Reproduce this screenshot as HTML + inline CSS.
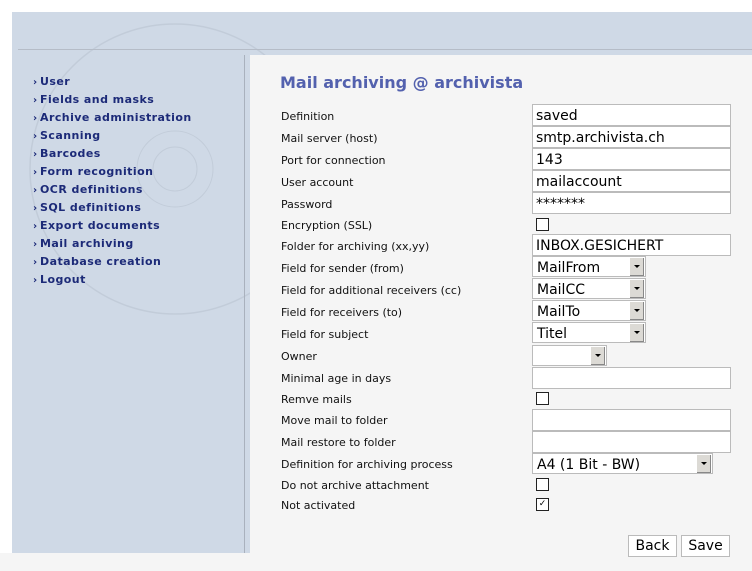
<!DOCTYPE html><html><head><style>
body{margin:0;width:752px;height:571px;background:#f5f5f5;position:relative;overflow:hidden;font-family:"DejaVu Sans","Liberation Sans",sans-serif}
#w{position:absolute;left:0;top:0;width:752px;height:12px;background:#fff}
#wl{position:absolute;left:0;top:0;width:12px;height:553px;background:#fff}
#p{position:absolute;left:12px;top:12px;width:740px;height:541px;background:#cfd9e6}
#hl{position:absolute;left:18px;top:49px;width:734px;height:1px;background:#b5bcc7}
#vl{position:absolute;left:244px;top:55px;width:1px;height:498px;background:#a9b1bd}
#c{position:absolute;left:250px;top:55px;width:502px;height:516px;background:#f5f5f5}
.m{position:absolute;left:33px;font-size:11px;font-weight:bold;color:#1c2a78;letter-spacing:.45px}
.m:before{content:"›";font-size:10px;display:inline-block;width:7px}
.l{position:absolute;left:281px;font-size:11px;color:#111}
.i{position:absolute;left:532px;width:194px;height:20px;border:1px solid #bbb;background:#fff;font-size:14px;line-height:23px;padding-left:3px;box-sizing:content-box}
.s{position:absolute;left:532px;height:21px;border:1px solid #bbb;background:#fff;font-size:14px;line-height:22px;padding-left:4px;box-sizing:border-box}
.s b{position:absolute;right:1px;top:1px;width:14px;height:18px;background:#dcdad5;border-right:1px solid #888;border-bottom:1px solid #888;box-sizing:border-box}
.s b:after{content:"";position:absolute;left:4px;top:7px;border:3px solid transparent;border-top:3px solid #000}
.c{position:absolute;left:536px;width:11px;height:11px;border:1px solid #222;background:#fff;font-size:9px;line-height:11px;text-align:center}
.btn{position:absolute;top:535px;height:20px;border:1px solid #bbb;background:#fff;font-size:14px;line-height:20px;text-align:center}
</style></head><body>
<div id="w"></div><div id="wl"></div><div id="p">
<svg width="740" height="541" style="position:absolute;left:0;top:0"><circle cx="163" cy="157" r="145" fill="none" stroke="#c2ccd9" stroke-width="1.5"/><circle cx="163" cy="157" r="38" fill="none" stroke="#c2ccd9"/><circle cx="163" cy="157" r="22" fill="none" stroke="#c2ccd9"/></svg></div>
<div id="hl"></div><div id="vl"></div><div id="c"></div>
<div class="m" style="top:75px">User</div>
<div class="m" style="top:93px">Fields and masks</div>
<div class="m" style="top:111px">Archive administration</div>
<div class="m" style="top:129px">Scanning</div>
<div class="m" style="top:147px">Barcodes</div>
<div class="m" style="top:165px">Form recognition</div>
<div class="m" style="top:183px">OCR definitions</div>
<div class="m" style="top:201px">SQL definitions</div>
<div class="m" style="top:219px">Export documents</div>
<div class="m" style="top:237px">Mail archiving</div>
<div class="m" style="top:255px">Database creation</div>
<div class="m" style="top:273px">Logout</div>
<div style="position:absolute;left:280px;top:73px;font-size:16px;font-weight:bold;color:#5361ae">Mail archiving @ archivista</div>
<div class="l" style="top:110px">Definition</div>
<div class="l" style="top:132px">Mail server (host)</div>
<div class="l" style="top:154px">Port for connection</div>
<div class="l" style="top:176px">User account</div>
<div class="l" style="top:198px">Password</div>
<div class="l" style="top:219px">Encryption (SSL)</div>
<div class="l" style="top:240px">Folder for archiving (xx,yy)</div>
<div class="l" style="top:262px">Field for sender (from)</div>
<div class="l" style="top:284px">Field for additional receivers (cc)</div>
<div class="l" style="top:306px">Field for receivers (to)</div>
<div class="l" style="top:328px">Field for subject</div>
<div class="l" style="top:350px">Owner</div>
<div class="l" style="top:372px">Minimal age in days</div>
<div class="l" style="top:393px">Remve mails</div>
<div class="l" style="top:414px">Move mail to folder</div>
<div class="l" style="top:436px">Mail restore to folder</div>
<div class="l" style="top:458px">Definition for archiving process</div>
<div class="l" style="top:479px">Do not archive attachment</div>
<div class="l" style="top:499px">Not activated</div>
<div class="i" style="top:104px">saved</div>
<div class="i" style="top:126px">smtp.archivista.ch</div>
<div class="i" style="top:148px">143</div>
<div class="i" style="top:170px">mailaccount</div>
<div class="i" style="top:192px">*******</div>
<div class="c" style="top:218px"></div>
<div class="i" style="top:234px">INBOX.GESICHERT</div>
<div class="s" style="top:256px;width:114px">MailFrom<b></b></div>
<div class="s" style="top:278px;width:114px">MailCC<b></b></div>
<div class="s" style="top:300px;width:114px">MailTo<b></b></div>
<div class="s" style="top:322px;width:114px">Titel<b></b></div>
<div class="s" style="top:345px;width:75px"><b></b></div>
<div class="i" style="top:367px"></div>
<div class="c" style="top:392px"></div>
<div class="i" style="top:409px"></div>
<div class="i" style="top:431px"></div>
<div class="s" style="top:453px;width:181px">A4 (1 Bit - BW)<b></b></div>
<div class="c" style="top:478px"></div>
<div class="c" style="top:498px">✓</div>
<div class="btn" style="left:628px;width:47px">Back</div>
<div class="btn" style="left:681px;width:47px">Save</div>
</body></html>
